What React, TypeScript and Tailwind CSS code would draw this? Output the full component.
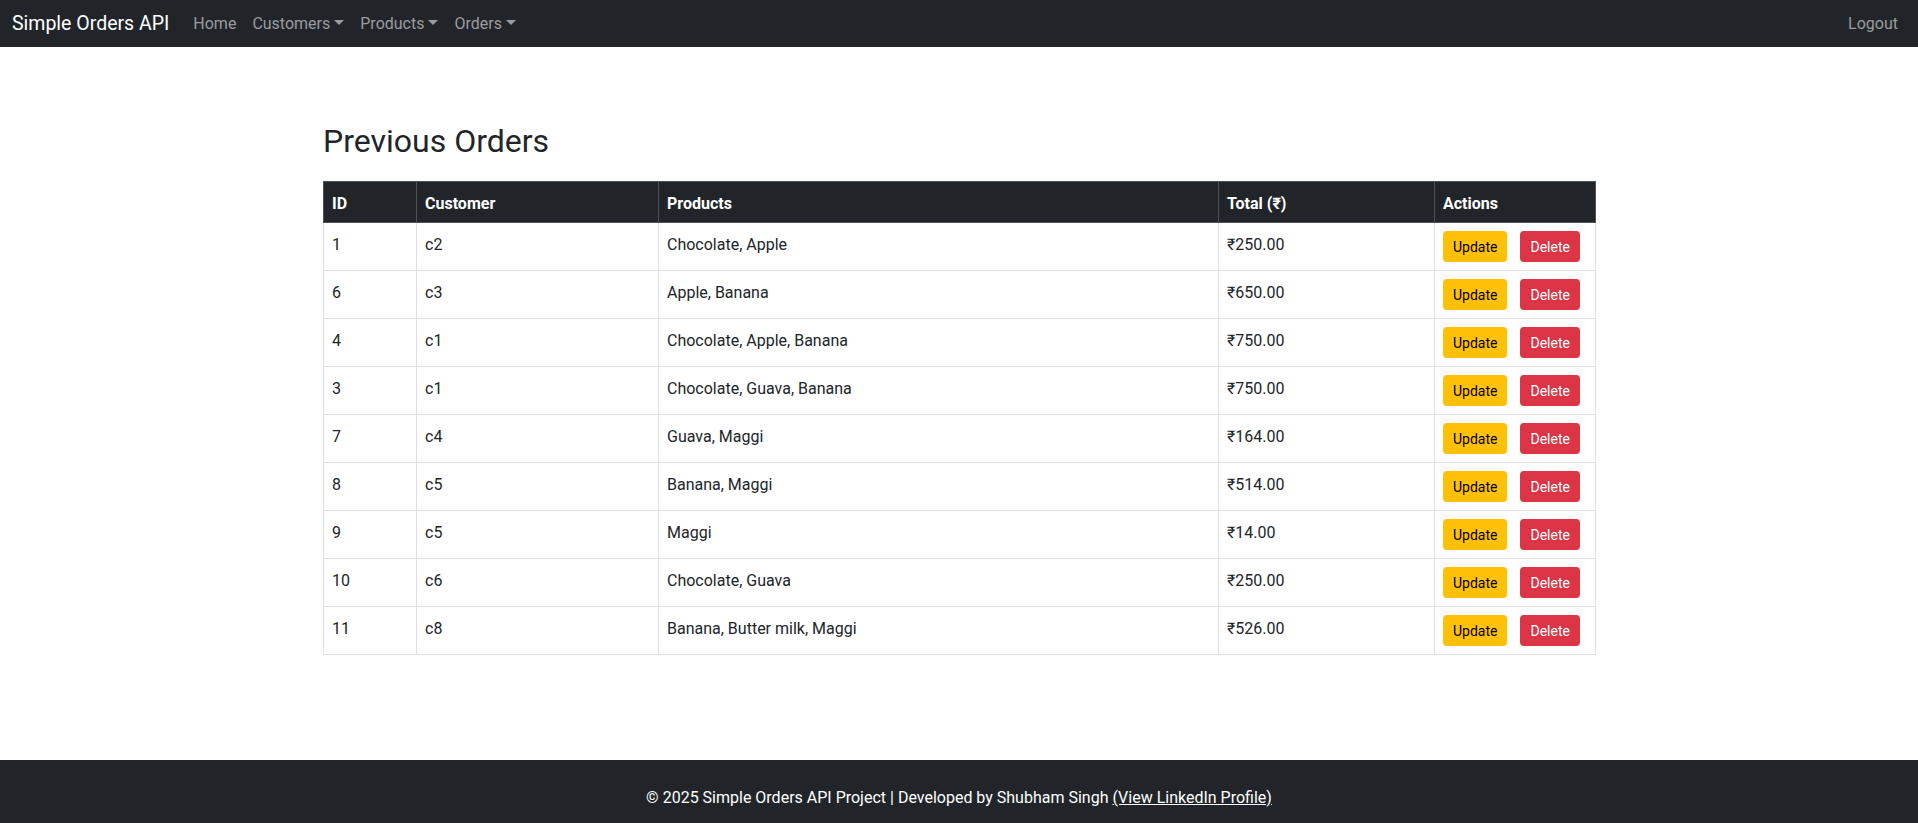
import React from 'react'

interface Order {
  id: number
  customer: string
  products: string
  total: string
}

const orders: Order[] = [
  { id: 1, customer: 'c2', products: 'Chocolate, Apple', total: '₹250.00' },
  { id: 6, customer: 'c3', products: 'Apple, Banana', total: '₹650.00' },
  { id: 4, customer: 'c1', products: 'Chocolate, Apple, Banana', total: '₹750.00' },
  { id: 3, customer: 'c1', products: 'Chocolate, Guava, Banana', total: '₹750.00' },
  { id: 7, customer: 'c4', products: 'Guava, Maggi', total: '₹164.00' },
  { id: 8, customer: 'c5', products: 'Banana, Maggi', total: '₹514.00' },
  { id: 9, customer: 'c5', products: 'Maggi', total: '₹14.00' },
  { id: 10, customer: 'c6', products: 'Chocolate, Guava', total: '₹250.00' },
  { id: 11, customer: 'c8', products: 'Banana, Butter milk, Maggi', total: '₹526.00' },
]

function NavLink({ label, dropdown }: { label: string; dropdown?: boolean }) {
  return (
    <span className="px-2 text-[#9a9c9f] leading-6 whitespace-nowrap">
      {label}
      {dropdown && (
        <span className="inline-block ml-[4px] align-[4px] border-t-[5px] border-x-[5px] border-x-transparent border-t-[#9a9c9f]" />
      )}
    </span>
  )
}

export default function App() {
  return (
    <div className="min-h-screen flex flex-col bg-white text-[#212529] font-['Roboto','Noto_Sans',sans-serif] text-base">
      <nav className="h-[47px] bg-[#212529] flex items-center justify-between px-3">
        <div className="flex items-center">
          <span className="text-[19.5px] text-white mr-4 whitespace-nowrap">Simple Orders API</span>
          <div className="flex items-center">
            <NavLink label="Home" />
            <NavLink label="Customers" dropdown />
            <NavLink label="Products" dropdown />
            <NavLink label="Orders" dropdown />
          </div>
        </div>
        <NavLink label="Logout" />
      </nav>

      <main className="flex-1">
        <div className="w-[1272px] mx-auto">
          <h2 className="mt-[75px] mb-[21px] text-[32px] leading-[1.2] font-normal">Previous Orders</h2>
          <table className="w-full table-fixed border-collapse text-left">
            <thead>
              <tr className="bg-[#212529] text-white">
                <th className="w-[93px] px-2 pt-[10px] pb-[6px] leading-6 font-bold border border-[#4d5154]">ID</th>
                <th className="w-[242px] px-2 pt-[10px] pb-[6px] leading-6 font-bold border border-[#4d5154]">Customer</th>
                <th className="w-[560px] px-2 pt-[10px] pb-[6px] leading-6 font-bold border border-[#4d5154]">Products</th>
                <th className="w-[216px] px-2 pt-[10px] pb-[6px] leading-6 font-bold border border-[#4d5154]">Total (₹)</th>
                <th className="w-[161px] px-2 pt-[10px] pb-[6px] leading-6 font-bold border border-[#4d5154]">Actions</th>
              </tr>
            </thead>
            <tbody>
              {orders.map((o) => (
                <tr key={o.id}>
                  <td className="px-2 pt-[10px] pb-[6px] leading-6 align-top border border-[#dee2e6]">{o.id}</td>
                  <td className="px-2 pt-[10px] pb-[6px] leading-6 align-top border border-[#dee2e6]">{o.customer}</td>
                  <td className="px-2 pt-[10px] pb-[6px] leading-6 align-top border border-[#dee2e6]">{o.products}</td>
                  <td className="px-2 pt-[10px] pb-[6px] leading-6 align-top border border-[#dee2e6]">{o.total}</td>
                  <td className="p-2 align-top border border-[#dee2e6]">
                    <div className="flex gap-[13px]">
                      <button className="bg-[#ffc107] text-black text-sm leading-[21px] px-[10px] pt-[6px] pb-[4px] rounded">Update</button>
                      <button className="bg-[#dc3545] text-white text-sm leading-[21px] px-[10px] pt-[6px] pb-[4px] rounded">Delete</button>
                    </div>
                  </td>
                </tr>
              ))}
            </tbody>
          </table>
        </div>
      </main>

      <footer className="h-[63px] bg-[#212529] text-white text-center pt-[26px] leading-6">
        © 2025 Simple Orders API Project | Developed by Shubham Singh{' '}
        <span className="underline">(View LinkedIn Profile)</span>
      </footer>
    </div>
  )
}
